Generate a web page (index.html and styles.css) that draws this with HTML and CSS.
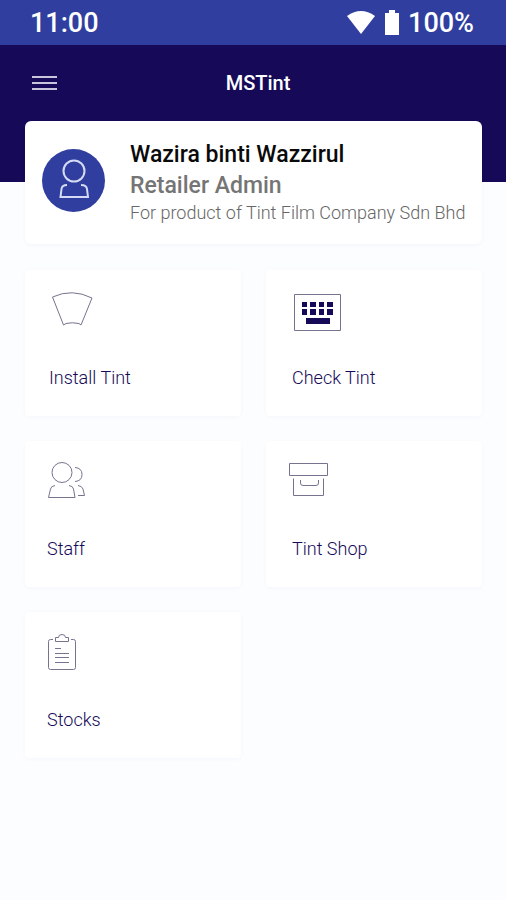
FILE: index.html
```html
<!DOCTYPE html>
<html lang="en">
<head>
<meta charset="utf-8">
<meta name="viewport" content="width=device-width, initial-scale=1">
<title>MSTint</title>
<link rel="stylesheet" href="styles.css">
</head>
<body>
<div class="status">
  <span class="clock">11:00</span>
  <span class="indicators">
    <svg class="wifi" width="30" height="26" viewBox="0 0 30 26" aria-hidden="true"><path d="M1 6Q15-4 29 6L15 24Z"/></svg>
    <svg class="battery" width="16" height="26" viewBox="0 0 16 26" aria-hidden="true"><path d="M1 3h4V0h6v3h4v22H1Z"/></svg>
    <span>100%</span>
  </span>
</div>
<header class="appbar">
  <button class="menu" type="button" aria-label="Menu">
    <svg width="26" height="14" viewBox="0 0 26 14"><path d="M0 1H25M0 7H25M0 13H25"/></svg>
  </button>
  <h1 class="title">MSTint</h1>
</header>
<main class="content">
  <section class="profile">
    <span class="avatar">
      <svg width="63" height="63" viewBox="0 0 63 63" aria-hidden="true"><circle cx="32" cy="22" r="10.500"/><path d="M25 36Q20 36 19.500 40L18.500 48H46L45 40Q44.500 36 39 36"/></svg>
    </span>
    <div class="details">
      <h2 class="name">Wazira binti Wazzirul</h2>
      <p class="role">Retailer Admin</p>
      <p class="company">For product of Tint Film Company Sdn Bhd</p>
    </div>
  </section>
  <nav class="tiles">
    <a class="tile" href="#install">
      <svg class="icon" viewBox="-4 0 60 48" aria-hidden="true"><path d="M3.500 7Q23-2 43 8L32 35L30 33.500Q23 32 17 33.500L14.500 35Z"/></svg>
      <span>Install Tint</span>
    </a>
    <a class="tile" href="#check">
      <svg class="icon" viewBox="-4 0 60 48" aria-hidden="true"><path d="M2.500 4.500h46v36h-46Z"/><path class="solid" d="M10 12h5v5h-5zM18 12h6v5h-6zM27 12h5v5h-5zM35 12h6v5h-6zM10 19h5v6h-5zM18 19h6v6h-6zM27 19h5v6h-5zM35 19h6v6h-6zM14 28h24v6H14z"/></svg>
      <span>Check Tint</span>
    </a>
    <a class="tile" href="#staff">
      <svg class="icon" viewBox="-4 0 60 48" aria-hidden="true"><circle cx="15" cy="11.500" r="10"/><path d="M28 6.500Q35 7 35 13.500Q35 20 28 20.500M8 24.500Q4 25 3.500 28L1.500 36.500H28L26.500 28Q26 25 22 24.500M31 24.500Q35 25 36 28L37.500 34.500H31"/></svg>
      <span>Staff</span>
    </a>
    <a class="tile" href="#shop">
      <svg class="icon" viewBox="-4 0 60 48" aria-hidden="true"><path d="M-2.500 2.500h38v12h-38ZM1.500 17.500v17h30v-17M8.500 19v3Q8.500 24.500 11 24.500H24Q26.500 24.500 26.500 22V19"/></svg>
      <span>Tint Shop</span>
    </a>
    <a class="tile" href="#stocks">
      <svg class="icon" viewBox="-4 0 60 48" aria-hidden="true"><path d="M6 7.500H3.500Q1.500 7.500 1.500 9.500V35.500Q1.500 37.500 3.500 37.500H26.500Q28.500 37.500 28.500 35.500V9.500Q28.500 7.500 26.500 7.500H24M8.500 9.500V5.500H11.500Q11.500 2.500 15 2.500Q18.500 2.500 18.500 5.500H21.500V9.500ZM8 16.500h6M8 21.500h14M8 25.500h14M8 30.500h14"/></svg>
      <span>Stocks</span>
    </a>
  </nav>
</main>
</body>
</html>
```
FILE: styles.css
```css
* {
  box-sizing: border-box;
}

body {
  margin: 0;
  min-height: 100vh;
  background: #fbfdff;
  color: #150958;
  font-family: Roboto, "Liberation Sans", sans-serif;
}

h1, h2, p {
  margin: 0;
}

svg {
  display: block;
  fill: none;
}

.status {
  display: flex;
  align-items: center;
  justify-content: space-between;
  height: 45px;
  padding: 0 32px 0 30px;
  background: #303f9f;
  color: #fff;
  font-size: 27px;
  font-weight: 500;
}

.indicators {
  display: flex;
  align-items: center;
  gap: 8px;
}

.wifi, .battery {
  fill: #fff;
}

.appbar {
  display: grid;
  grid-template-columns: 26px 1fr 26px;
  align-items: start;
  height: 137px;
  padding: 24px 22px 0 32px;
  background: #150958;
  color: #fff;
}

.menu {
  height: 28px;
  padding: 0;
  border: 0;
  background: none;
}

.menu svg {
  stroke: #c9c5dc;
  stroke-width: 2;
}

.title {
  font-size: 20px;
  font-weight: 500;
  line-height: 28px;
  text-align: center;
}

.content {
  margin-top: -61px;
  padding: 0 24px 24px 25px;
}

.profile {
  display: flex;
  align-items: flex-start;
  gap: 25px;
  min-height: 123px;
  padding: 18px 17px;
  border-radius: 6px;
  background: #fff;
  box-shadow: 0 1px 4px rgba(21, 9, 88, 0.04);
}

.avatar {
  flex: none;
  width: 63px;
  height: 63px;
  margin-top: 10px;
  border-radius: 50%;
  background: #303f9f;
}

.avatar svg {
  stroke: #d5daf5;
  stroke-width: 2;
}

.name, .role {
  font-size: 23px;
  font-weight: 500;
  line-height: 31px;
}

.name {
  color: #0a0a0a;
}

.role {
  color: #757575;
}

.company {
  color: #666;
  font-size: 18px;
  font-weight: 300;
  line-height: 24px;
  white-space: nowrap;
}

.tiles {
  display: grid;
  grid-template-columns: 1fr 1fr;
  gap: 25px;
  margin-top: 26px;
}

.tile {
  display: flex;
  flex-direction: column;
  gap: 28px;
  min-height: 146px;
  padding: 20px 22px;
  border-radius: 4px;
  background: #fff;
  box-shadow: 0 1px 4px rgba(21, 9, 88, 0.03);
  color: #150958;
  font-size: 18px;
  font-weight: 300;
  line-height: 24px;
  text-decoration: none;
}

.tile:first-child {
  padding-left: 24px;
}

.tile:nth-child(even) {
  padding-left: 26px;
}

.icon {
  width: 60px;
  height: 48px;
  margin-left: -4px;
  stroke: #77738f;
  stroke-width: 1;
}

.icon .solid {
  fill: #150958;
  stroke: none;
}
```
